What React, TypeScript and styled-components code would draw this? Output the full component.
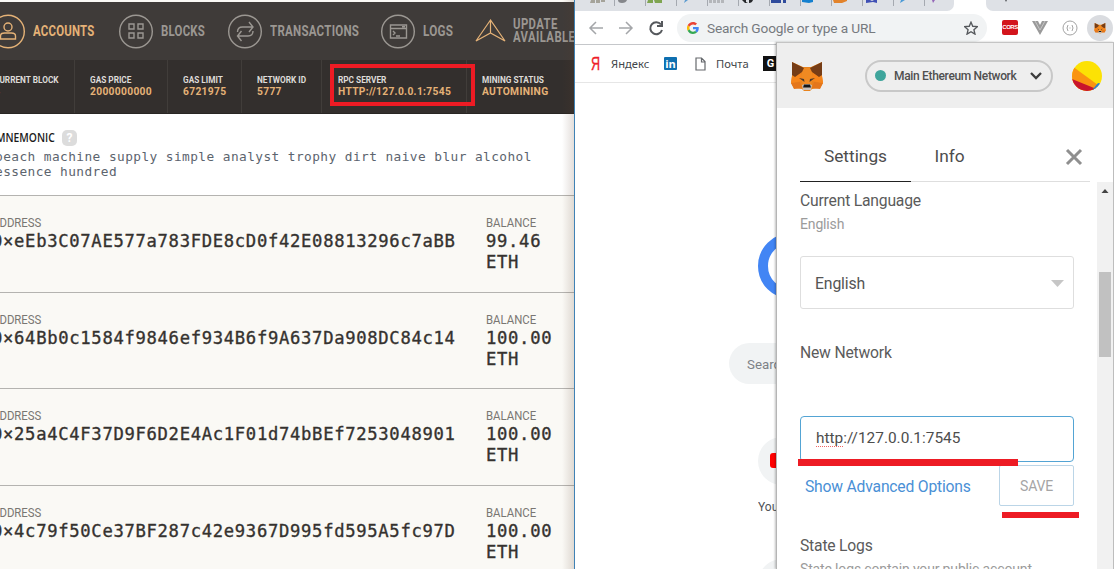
import React from "react";
import styled, { createGlobalStyle } from "styled-components";

const Global = createGlobalStyle`
  *{box-sizing:border-box}
  html,body{margin:0;padding:0}
  body{width:1114px;height:569px;overflow:hidden;background:#fff;font-family:Roboto,sans-serif}
  svg{display:block;flex:none}
`;

const Screen = styled.div`position:relative;display:flex;width:1114px;height:569px;overflow:hidden;`;

/* Text squeezed horizontally to a condensed face */
const Cond = styled.span<{ $s?: number; $size: number; $c: string; $w?: number; $lh?: number; $ls?: number }>`
  display:block;width:max-content;white-space:pre;transform-origin:0 50%;
  transform:scaleX(${p => p.$s ?? 0.87});
  font-size:${p => p.$size}px;line-height:${p => p.$lh ?? p.$size}px;
  font-weight:${p => p.$w ?? 700};color:${p => p.$c};letter-spacing:${p => p.$ls ?? 0}px;
`;

const Ganache = styled.section`
  width:574px;height:569px;flex:none;overflow:hidden;display:flex;flex-direction:column;
  padding-top:2px;background:#faf9f5;
`;
const NavBar = styled.nav`display:flex;height:58px;flex:none;align-items:center;background:#3f3b39;overflow:hidden;`;
const NavItem = styled.div<{ $w: number; $ml?: number }>`
  display:flex;align-items:center;width:${p => p.$w}px;flex:none;gap:7px;margin-left:${p => p.$ml ?? 0}px;
`;
const Stats = styled.div`display:flex;height:54px;flex:none;background:#332f2d;overflow:hidden;border-bottom:1px solid #292624;`;
const Stat = styled.div<{ $w: number; $pad: number; $line?: boolean; $ml?: number }>`
  width:${p => p.$w}px;flex:none;padding:14px 0 0 ${p => p.$pad}px;margin-left:${p => p.$ml ?? 0}px;
  border-right:${p => (p.$line === false ? 0 : 1)}px solid #413d3a;
`;
const Mnemonic = styled.div`
  height:82px;flex:none;background:#fff;border-bottom:1px solid #b4b3b0;padding-top:15px;overflow:hidden;
`;
const MnHead = styled.div`display:flex;align-items:center;height:17px;margin-left:-4px;`;
const MnTitle = styled.div`
  width:66px;font:600 12px/17px "Open Sans",sans-serif;color:#1c1c1c;transform:scaleX(.86);transform-origin:0 50%;
`;
const Help = styled.span`
  width:15px;height:16px;border-radius:5px;background:#dcdcdc;color:#fff;font-size:12px;font-weight:700;
  line-height:16px;text-align:center;
`;
const Words = styled.p`
  margin:3px 0 0 -5px;font-family:"DejaVu Sans Mono",monospace;font-size:12.8px;line-height:15px;
  letter-spacing:.43px;color:#5c646e;white-space:pre;
`;
const Account = styled.div`
  display:flex;height:96.7px;flex:none;border-bottom:1px solid #b4b3b0;padding-top:19px;
`;
const AddrCol = styled.div`width:486px;flex:none;margin-left:-8px;`;
const BalCol = styled.div`width:88px;margin-left:8px;`;
const Mono = styled.div`
  font-family:"DejaVu Sans Mono",monospace;font-size:17.2px;line-height:21px;letter-spacing:.69px;color:#35322f;
  -webkit-text-stroke:.35px #35322f;white-space:pre;margin-top:1px;
`;

const Browser = styled.section`
  width:540px;height:569px;flex:none;border-left:1px solid #3f82b5;background:#fff;overflow:hidden;
`;
const TabStrip = styled.div`display:flex;justify-content:space-between;height:11px;background:#fff;`;
const TabGroup = styled.div`
  display:flex;width:379px;height:11px;align-items:flex-start;padding-left:14px;background:#dee1e6;
  border-bottom-right-radius:7px;overflow:hidden;
`;
const Tab = styled.div<{ $w: number; $line: boolean }>`
  display:flex;width:${p => p.$w}px;flex:none;height:6px;border-right:1px solid ${p => (p.$line ? "#a5a9b0" : "transparent")};
  padding-left:1px;
`;
const TabRest = styled.div`width:128px;height:11px;padding-left:17px;background:#dee1e6;border-bottom-left-radius:7px;`;
const Toolbar = styled.div`
  display:flex;height:34px;align-items:center;padding-left:13px;border-bottom:1px solid #c5c7ca;
`;
const NavIcons = styled.div`display:flex;gap:14px;width:89px;flex:none;`;
const Omnibox = styled.div`
  display:flex;align-items:center;width:310px;height:28px;border-radius:14px;background:#f1f3f4;padding:0 9px 0 10px;flex:none;
`;
const OmniText = styled.span`margin-left:8px;flex:1;font-size:13.7px;letter-spacing:-.16px;color:#767a7f;white-space:nowrap;`;
const Extensions = styled.div`display:flex;align-items:center;margin-left:15px;gap:14px;`;
const Cors = styled.span`
  display:flex;justify-content:center;width:16px;height:15px;border-radius:2px;background:#d3151c;color:#fff;
  font:700 6px/15px "Liberation Sans",sans-serif;letter-spacing:-.5px;
`;
const FoxButton = styled.span`display:grid;place-items:center;width:26px;height:26px;border-radius:13px;background:#dadce0;margin-left:-5px;`;
const Bookmarks = styled.div`
  display:flex;align-items:center;height:38px;padding-left:16px;border-bottom:1px solid #e6e6e6;
  font-family:"Noto Sans",sans-serif;font-size:11.2px;color:#42464a;
`;
const Ya = styled.span`
  width:20px;font:400 19px/20px "Liberation Sans",sans-serif;color:#ee2028;-webkit-text-stroke:.4px #ee2028;
  transform:scaleX(.66);transform-origin:0 50%;
`;
const Mark = styled.span<{ $w: number }>`width:${p => p.$w}px;flex:none;`;
const LinkedIn = styled.span`width:13px;height:13px;background:#0e6fb0;color:#fff;font:700 11px/13px "Open Sans",sans-serif;text-align:center;border-radius:1px;`;
const GMark = styled.span`width:15px;height:15px;background:#111;color:#fff;font:700 11px/15px Roboto,sans-serif;text-align:center;`;
const Page = styled.div`display:flex;flex-direction:column;align-items:flex-start;padding-top:150px;`;
const GoogleRing = styled.div`width:66px;height:66px;border:10px solid #4285f4;border-radius:50%;margin-left:183px;`;
const SearchPill = styled.div`
  margin:44px 0 0 154px;width:48px;height:41px;border-radius:21px 0 0 21px;background:#f1f3f4;padding-left:18px;
  font-size:13.3px;line-height:43px;color:#7d8186;overflow:hidden;
`;
const Shortcut = styled.div<{ $mt: number }>`
  display:grid;place-items:center;width:48px;height:48px;border-radius:50%;background:#f1f3f4;margin:${p => p.$mt}px 0 0 183px;
`;
const ShortLabel = styled.div`width:20px;overflow:hidden;margin:14px 0 0 183px;font-size:12px;line-height:16px;color:#505357;`;

const Popup = styled.aside`
  position:absolute;left:776px;top:42px;width:338px;height:527px;background:#fff;border-left:1px solid #b5b5b5;
  border-top:1px solid #c4c4c4;border-right:1px solid #bdbdbd;box-shadow:-1px 0 2px rgba(0,0,0,.25);overflow:hidden;
`;
const PopHead = styled.header`display:flex;align-items:center;height:65px;background:#eee;padding:0 0 0 13px;`;
const Network = styled.div`
  display:flex;align-items:center;width:188px;height:32px;margin-left:41px;border:2px solid #c8c8c8;border-radius:16px;
  padding-left:8px;font-size:12px;font-weight:500;color:#505050;
`;
const Dot = styled.i`width:11px;height:11px;border-radius:50%;background:#3fa59c;margin-right:8px;`;
const NetName = styled.span`width:136px;white-space:nowrap;letter-spacing:-.33px;`;
const Avatar = styled.div`margin-left:19px;`;
const PopTabs = styled.div`
  display:flex;height:74px;margin-left:23px;width:290px;border-bottom:1px solid #dedede;
  font-size:17.3px;color:#4d4d4d;
`;
const PopTab = styled.div<{ $w: number; $on?: boolean }>`
  width:${p => p.$w}px;height:74px;padding-top:36px;line-height:24px;text-align:center;
  border-bottom:${p => (p.$on ? "1.5px solid #222" : "0")};
`;
const Close = styled.div`margin-left:77px;padding-top:40px;`;
const Scroller = styled.div`display:flex;height:388px;`;
const Content = styled.div`width:297px;padding-left:23px;margin-right:23px;overflow:hidden;`;
const Label = styled.div<{ $mt: number }>`
  margin-top:${p => p.$mt}px;font-size:15.7px;letter-spacing:-.2px;line-height:22px;color:#5b5b5b;white-space:nowrap;
`;
const Sub = styled.div`margin-top:3px;font-size:14px;letter-spacing:-.15px;line-height:18px;color:#9b9b9b;white-space:nowrap;`;
const Select = styled.div`
  display:flex;align-items:center;justify-content:space-between;width:274px;height:53px;margin-top:23px;
  border:1px solid #dedede;border-radius:3px;padding:2px 9px 0 14px;font-size:15.8px;letter-spacing:-.15px;color:#555;
`;
const Input = styled.div`
  width:274px;height:46px;margin-top:52px;border:1px solid #53a4d4;border-radius:4px;
  padding:10px 15px;font-size:15.4px;line-height:22px;color:#4d4d4d;
`;
const Misspelt = styled.span`text-decoration:underline dotted #ee6666 1px;text-underline-offset:3px;text-decoration-skip-ink:none;`;
const Actions = styled.div`display:flex;width:274px;height:41px;margin-top:3px;padding-left:5px;justify-content:space-between;align-items:center;`;
const Advanced = styled.a`padding-top:2px;font-size:15.7px;letter-spacing:-.2px;color:#4a90d6;white-space:nowrap;`;
const Save = styled.div`width:75px;height:41px;border:1px solid #bbd5e7;border-radius:2px;font-size:14px;letter-spacing:-.2px;line-height:41px;text-align:center;color:#a5a5a5;`;
const Track = styled.div`width:16px;flex:none;height:388px;background:#f1f1f1;padding:6px 2px 0;`;
const Thumb = styled.div`width:12px;height:85px;background:#c1c1c1;margin-top:79px;`;
/* Red annotations drawn above both windows */
const RedBox = styled.div`position:absolute;left:330px;top:64px;width:145px;height:42px;border:4px solid #ed1b24;`;
const RedLine = styled.div<{ $x: number; $y: number; $w: number; $h: number }>`
  position:absolute;left:${p => p.$x}px;top:${p => p.$y}px;width:${p => p.$w}px;height:${p => p.$h}px;background:#ed1b24;
`;
const EdgeShade = styled.div`position:absolute;left:562px;top:0;width:12px;height:569px;background:linear-gradient(90deg,transparent,rgba(90,60,40,.17));`;

const Ring = ({ color, children }: { color: string; children: React.ReactNode }) => (
  <svg width="35" height="35" viewBox="0 0 35 35" fill="none" stroke={color} strokeWidth="1.4">
    <circle cx="17" cy="17.5" r="16.3" />
    {children}
  </svg>
);

const Fox = ({ size }: { size: number }) => (
  <svg width={size} height={size} viewBox="0 0 34 34">
    <path d="M2 3 13 8h8l11-5v14l1 7-3 5-8 1-2 2h-6l-2-2-8-1-3-5 1-7z" fill="#e8831d" />
    <path d="M13 9h8l2 9-2 8h-8l-2-8z" fill="#f08a22" />
    <path d="m1 24 9-1 2 6-8 1zm32 0-9-1-2 6 8 1z" fill="#e4761b" />
    <path d="m2 17 9-3 1 8-11 2zm30 0-9-3-1 8 11 2z" fill="#f6851b" />
    <path d="M2 3 14 9l-2 4-7 5-3-2zM32 3 20 9l2 4 7 5 3-2z" fill="#763d16" />
    <path d="m9 19 5 1 .5 3zm16 0-5 1-.5 3z" fill="#4c3a2c" />
    <path d="m12 26 3-1h4l3 1-1 5h-8z" fill="#c9c0b8" />
    <path d="M14 25.500h6l1 3h-8z" fill="#161616" />
  </svg>
);

const gold = "#e5b277";
const grey = "#9b9792";

const accounts = [
  ["0×eEb3C07AE577a783FDE8cD0f42E08813296c7aBB", "99.46"],
  ["0×64Bb0c1584f9846ef934B6f9A637Da908DC84c14", "100.00"],
  ["0×25a4C4F37D9F6D2E4Ac1F01d74bBEf7253048901", "100.00"],
  ["0×4c79f50Ce37BF287c42e9367D995fd595A5fc97D", "100.00"],
];
const stats: [string, string, number, number][] = [
  ["CURRENT BLOCK", "4", 81, 0],
  ["GAS PRICE", "2000000000", 93, 15],
  ["GAS LIMIT", "6721975", 74, 15],
  ["NETWORK ID", "5777", 80, 15],
  ["RPC SERVER", "HTTP://127.0.0.1:7545", 145, 16],
  ["MINING STATUS", "AUTOMINING", 110, 15],
];
/* favicon silhouette, its colour, tab width, whether a divider follows */
const tabs: [string, string, number, boolean][] = [
  ["M1 0h4v3H0zM6 0h4v3H6zM11 0h4v2h-4z", "#a5a39a", 26, true],
  ["M2 0h9q-1 3-5 3T2 0z", "#85878b", 31, true],
  ["M1 0h5v3H0zM7 0h8v3H8z", "#7fa551", 31, true],
  ["M7 0h3L6 3z", "#5b9bd0", 31, true],
  ["M0 0h3v3H0zM4 0h3v3H4zM8 0h3v3H8zM12 0h3v3h-3z", "#b4b6ba", 31, true],
  ["M2 0h4v2l2 1H5zM9 0h4q-1 3-4 3z", "#26282b", 31, true],
  ["M0 0h10v3H0zM12 0h3v3h-3z", "#2f4b9c", 31, true],
  ["M0 0h11v2l-4 1-7-1z", "#1580cf", 31, true],
  ["M0 0h14v1l-5 2H1z", "#e2832c", 31, true],
  ["M2 0h4l2 1 2-1h3v3L9 2 2 3z", "#3f4fb5", 31, true],
  ["M6 0h4L5 3z", "#4a9ad6", 31, true],
  ["M6 0h3L7 3z", "#9467b8", 25, false],
];

export default function App() {
  return (
    <Screen>
      <Global />
      <Ganache>
        <NavBar>
          <NavItem $w={128} $ml={-9}>
            <Ring color={gold}>
              <circle cx="17" cy="13" r="4" />
              <path d="M9.500 25v-3q0-3 4-3h7q4 0 4 3v3z" />
            </Ring>
            <Cond $size={15} $c={gold} $ls={0.3} $s={0.76}>ACCOUNTS</Cond>
          </NavItem>
          <NavItem $w={109}>
            <Ring color={grey}>
              <path d="M10 10h5v5h-5zm9 0h5v5h-5zm-9 9h5v5h-5zm9 0h5v5h-5z" />
            </Ring>
            <Cond $size={15} $c={grey} $ls={0.3} $s={0.76}>BLOCKS</Cond>
          </NavItem>
          <NavItem $w={153}>
            <Ring color={grey}>
              <path d="M9.500 18q0-5 5-5H25m-4-5 4 5-4 5M25 17q0 5-5 5H9.500m4-5-4 5 4 5" />
            </Ring>
            <Cond $size={15} $c={grey} $ls={0.3} $s={0.77}>TRANSACTIONS</Cond>
          </NavItem>
          <NavItem $w={95}>
            <Ring color={grey}>
              <path d="M9.500 11h16v13h-16zM9.500 14.500h16M12 17l2 2-2 2m3 1h4M21 12.800h3" />
            </Ring>
            <Cond $size={15} $c={grey} $ls={0.3} $s={0.78}>LOGS</Cond>
          </NavItem>
          <NavItem $w={120} $ml={-1}>
            <svg width="31" height="24" viewBox="0 0 31 24" fill="none" stroke={gold} strokeWidth="1.2">
              <path d="M15.500 1 1 22l14.500-8L30 22zM15.500 1v13" />
            </svg>
            <Cond $size={14} $lh={13} $c={grey} $ls={0.5} $s={0.81}>{"UPDATE\nAVAILABLE"}</Cond>
          </NavItem>
        </NavBar>
        <Stats>
          {stats.map(([k, v, w, p], i) => (
            <Stat key={k} $w={w} $pad={p} $line={i < 5} $ml={i ? 0 : -6}>
              <Cond $size={9.5} $lh={11} $c="#dedbd8">{k}</Cond>
              <Cond $size={11.8} $lh={12} $c={gold} $ls={0.36}>{v}</Cond>
            </Stat>
          ))}
        </Stats>
        <Mnemonic>
          <MnHead><MnTitle>MNEMONIC</MnTitle><Help>?</Help></MnHead>
          <Words>{"beach machine supply simple analyst trophy dirt naive blur alcohol\nessence hundred"}</Words>
        </Mnemonic>
        {accounts.map(([a, b]) => (
          <Account key={a}>
            <AddrCol>
              <Cond $size={12.5} $lh={15} $w={400} $c="#797672" $s={0.91}>ADDRESS</Cond>
              <Mono>{a}</Mono>
            </AddrCol>
            <BalCol>
              <Cond $size={12.5} $lh={15} $w={400} $c="#797672" $s={0.91}>BALANCE</Cond>
              <Mono>{b + "\nETH"}</Mono>
            </BalCol>
          </Account>
        ))}
      </Ganache>
      <Browser>
        <TabStrip>
          <TabGroup>
            {tabs.map(([d, c, w, line]) => (
              <Tab key={c} $w={w} $line={line}><svg width="16" height="3"><path d={d} fill={c} /></svg></Tab>
            ))}
          </TabGroup>
          <TabRest><svg width="6" height="3"><path d="M2 0h2L3 2z" fill="#55585c" /></svg></TabRest>
        </TabStrip>
        <Toolbar>
          <NavIcons>
            <svg width="16" height="16" fill="none" stroke="#a4a6a9" strokeWidth="1.5"><path d="M15 8H2m6-6L2 8l6 6" /></svg>
            <svg width="16" height="16" fill="none" stroke="#a4a6a9" strokeWidth="1.5"><path d="M1 8h13M8 2l6 6-6 6" /></svg>
            <svg width="16" height="16" fill="none" stroke="#55585c" strokeWidth="2"><path d="M13 4.500A6 6 0 1 0 14 10M14 1v5H9" /></svg>
          </NavIcons>
          <Omnibox>
            <svg width="12" height="12" viewBox="0 0 48 48">
              <path fill="#EA4335" d="M24 9.500c3.500 0 6.700 1.200 9.200 3.600l6.900-6.900C35.900 2.400 30.500 0 24 0 14.600 0 6.500 5.400 2.600 13.200l8 6.200C12.400 13.700 17.700 9.500 24 9.500z" />
              <path fill="#4285F4" d="M47 24.600c0-1.600-.2-3.100-.4-4.600H24v9h12.900c-.6 3-2.300 5.500-4.800 7.200l7.700 6C44.400 38 47 31.800 47 24.600z" />
              <path fill="#FBBC05" d="M10.500 28.600a14.500 14.500 0 0 1 0-9.200l-8-6.200a24 24 0 0 0 0 21.600z" />
              <path fill="#34A853" d="M24 48c6.500 0 11.900-2.100 15.900-5.800l-7.700-6C30 37.700 27.200 38.500 24 38.500c-6.300 0-11.600-4.200-13.500-9.900l-8 6.200C6.500 42.600 14.600 48 24 48z" />
            </svg>
            <OmniText>Search Google or type a URL</OmniText>
            <svg width="14" height="14" viewBox="0 0 24 24" fill="none" stroke="#55585c" strokeWidth="2.300"><path d="m12 2 3 7 8 .7-6 5.200 1.800 7.600L12 18.300l-6.800 4.200L7 14.900 1 9.700 9 9z" /></svg>
          </Omnibox>
          <Extensions>
            <Cors>CORS</Cors>
            <svg width="16" height="14"><path d="M0 0h6l2 4 2-4h6L8 14z" fill="#9a9a9a" /><path d="m3 0 5 9 5-9" fill="none" stroke="#c5c5c5" /></svg>
            <svg width="16" height="16" fill="none" stroke="#a3a3a3"><circle cx="8" cy="8" r="7" /><path d="M6 5Q4 8 6 11M10 5q2 3 0 6M7.500 8h1" /></svg>
            <FoxButton><Fox size={12} /></FoxButton>
          </Extensions>
        </Toolbar>
        <Bookmarks>
          <Ya>Я</Ya><Mark $w={53}>Яндекс</Mark><LinkedIn>in</LinkedIn>
          <svg width="11" height="14" style={{ margin: "0 10px 0 18px" }} fill="none" stroke="#66696d" strokeWidth="1.200"><path d="M1 1h5.500L10 4.500V13H1zM6.500 1v4H10" /></svg>
          <Mark $w={47}>Почта</Mark><GMark>G</GMark>
        </Bookmarks>
        <Page>
          <GoogleRing />
          <SearchPill>Search</SearchPill>
          <Shortcut $mt={53}><svg width="24" height="16"><rect width="24" height="15" rx="3" fill="#f00" /></svg></Shortcut>
          <ShortLabel>YouTube</ShortLabel>
          <Shortcut $mt={44} />
        </Page>
      </Browser>
      <Popup>
        <PopHead>
          <Fox size={34} />
          <Network>
            <Dot /><NetName>Main Ethereum Network</NetName>
            <svg width="12" height="8" fill="none" stroke="#3c3c3c" strokeWidth="2.300"><path d="m1 1 5 5 5-5" /></svg>
          </Network>
          <Avatar>
            <svg width="30" height="30" viewBox="0 0 30 30">
              <clipPath id="ava"><circle cx="15" cy="15" r="15" /></clipPath>
              <g clipPath="url(#ava)">
                <path fill="#fce204" d="M0 0h30v30H0z" />
                <path fill="#fa9410" d="m0 5 26 19-4 6H0z" />
                <path fill="#c8142d" d="m0 18 22 9v3H0z" />
                <path fill="#2a7fd0" d="m21 28 5-6 4 1v7h-9z" />
              </g>
            </svg>
          </Avatar>
        </PopHead>
        <PopTabs>
          <PopTab $w={111} $on>Settings</PopTab>
          <PopTab $w={77}>Info</PopTab>
          <Close><svg width="18" height="18" stroke="#8f8f8f" strokeWidth="3"><path d="m2 2 14 14M16 2 2 16" /></svg></Close>
        </PopTabs>
        <Scroller>
          <Content>
            <Label $mt={8}>Current Language</Label>
            <Sub>English</Sub>
            <Select>English<svg width="13" height="8"><path d="M0 0h13L6.500 7z" fill="#c6c6c6" /></svg></Select>
            <Label $mt={33}>New Network</Label>
            <Input><Misspelt>http</Misspelt>://127.0.0.1:7545</Input>
            <Actions><Advanced>Show Advanced Options</Advanced><Save>SAVE</Save></Actions>
            <Label $mt={29}>State Logs</Label>
            <Sub>State logs contain your public account</Sub>
          </Content>
          <Track>
            <svg width="12" height="5"><path d="M2.500 5h7L6 1z" fill="#444" /></svg>
            <Thumb />
          </Track>
        </Scroller>
      </Popup>
      <EdgeShade />
      <RedBox />
      <RedLine $x={798} $y={459} $w={220} $h={7} />
      <RedLine $x={1002} $y={512} $w={77} $h={6} />
    </Screen>
  );
}
